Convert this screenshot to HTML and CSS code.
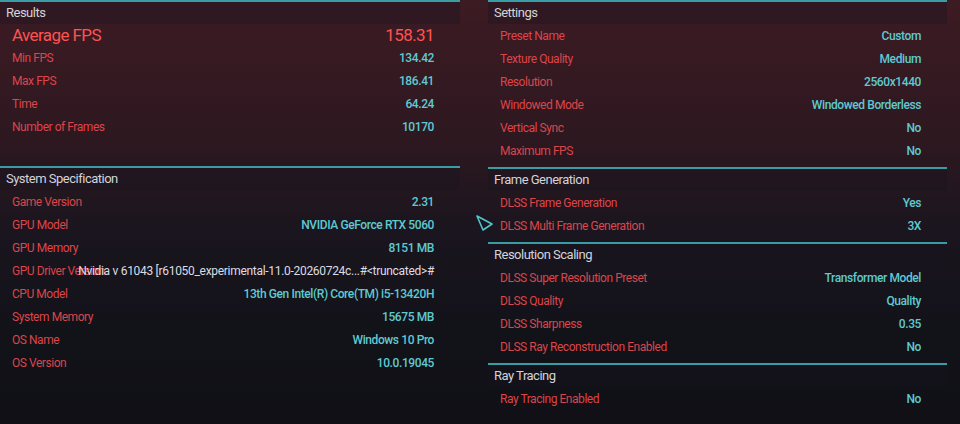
FILE: index.html
```html
<!DOCTYPE html>
<html lang="en">
<head>
    <meta charset="UTF-8">
    <meta name="viewport" content="width=device-width, initial-scale=1.0">
    <title>Benchmark Results</title>
    <link rel="stylesheet" href="styles.css">
</head>
<body>
    <div class="screen">
        <div class="column">
            <section class="panel panel-results">
                <h2 class="panel-title">Results</h2>
                <div class="row row-main"><span class="label">Average FPS</span><span class="value">158.31</span></div>
                <div class="row"><span class="label">Min FPS</span><span class="value">134.42</span></div>
                <div class="row"><span class="label">Max FPS</span><span class="value">186.41</span></div>
                <div class="row"><span class="label">Time</span><span class="value">64.24</span></div>
                <div class="row"><span class="label">Number of Frames</span><span class="value">10170</span></div>
            </section>

            <section class="panel">
                <h2 class="panel-title">System Specification</h2>
                <div class="row"><span class="label">Game Version</span><span class="value">2.31</span></div>
                <div class="row"><span class="label">GPU Model</span><span class="value">NVIDIA GeForce RTX 5060</span></div>
                <div class="row"><span class="label">GPU Memory</span><span class="value">8151 MB</span></div>
                <div class="row"><span class="label">GPU Driver Version</span><span class="value value-raw">Nvidia v 61043 [r61050_experimental-11.0-20260724c...#&lt;truncated&gt;#</span></div>
                <div class="row"><span class="label">CPU Model</span><span class="value">13th Gen Intel(R) Core(TM) i5-13420H</span></div>
                <div class="row"><span class="label">System Memory</span><span class="value">15675 MB</span></div>
                <div class="row"><span class="label">OS Name</span><span class="value">Windows 10 Pro</span></div>
                <div class="row"><span class="label">OS Version</span><span class="value">10.0.19045</span></div>
            </section>
        </div>

        <div class="column column-right">
            <section class="panel">
                <h2 class="panel-title">Settings</h2>
                <div class="row"><span class="label">Preset Name</span><span class="value">Custom</span></div>
                <div class="row"><span class="label">Texture Quality</span><span class="value">Medium</span></div>
                <div class="row"><span class="label">Resolution</span><span class="value">2560x1440</span></div>
                <div class="row"><span class="label">Windowed Mode</span><span class="value">Windowed Borderless</span></div>
                <div class="row"><span class="label">Vertical Sync</span><span class="value">No</span></div>
                <div class="row"><span class="label">Maximum FPS</span><span class="value">No</span></div>
            </section>

            <section class="panel">
                <h2 class="panel-title">Frame Generation</h2>
                <div class="row"><span class="label">DLSS Frame Generation</span><span class="value">Yes</span></div>
                <div class="row"><span class="label">DLSS Multi Frame Generation</span><span class="value">3X</span></div>
            </section>

            <section class="panel">
                <h2 class="panel-title">Resolution Scaling</h2>
                <div class="row"><span class="label">DLSS Super Resolution Preset</span><span class="value">Transformer Model</span></div>
                <div class="row"><span class="label">DLSS Quality</span><span class="value">Quality</span></div>
                <div class="row"><span class="label">DLSS Sharpness</span><span class="value">0.35</span></div>
                <div class="row"><span class="label">DLSS Ray Reconstruction Enabled</span><span class="value">No</span></div>
            </section>

            <section class="panel">
                <h2 class="panel-title">Ray Tracing</h2>
                <div class="row"><span class="label">Ray Tracing Enabled</span><span class="value">No</span></div>
            </section>
        </div>

        <!-- mouse pointer -->
        <svg class="cursor" width="20" height="20" viewBox="0 0 20 20">
            <polygon points="2,2 17,10 8,16" fill="none" stroke="#4fc6cf" stroke-width="1.6" stroke-linejoin="round"/>
        </svg>
    </div>
</body>
</html>
```

FILE: styles.css
```css
/* General Reset */
* {
    margin: 0;
    padding: 0;
    box-sizing: border-box;
}

body {
    width: 960px;
    height: 424px;
    overflow: hidden;
    font-family: Roboto, 'Noto Sans', sans-serif;
    background: linear-gradient(180deg, #3d1b23 0%, #2e1820 32%, #1a151e 55%, #121219 78%, #101016 100%);
}

.screen {
    position: relative;
    display: grid;
    grid-template-columns: 460px 459px;
    column-gap: 28px;
    height: 100%;
}

.column {
    display: flex;
    flex-direction: column;
}

.panel {
    border-top: 2px solid #3a9da5;
    padding-bottom: 5px;
}

.panel-results {
    padding-bottom: 28px;
}

.panel-title {
    height: 22px;
    line-height: 22px;
    padding-left: 6px;
    font-size: 13px;
    font-weight: 400;
    letter-spacing: -0.5px;
    color: #d3d3d8;
    background: rgba(22, 20, 32, 0.35);
}

.row {
    display: grid;
    height: 23px;
    align-items: center;
    padding: 0 26px 0 12px;
    font-size: 12px;
    white-space: nowrap;
}

/* label and value share one cell, so a long value runs over its label */
.row > span {
    grid-area: 1 / 1;
}

.label {
    justify-self: start;
    color: #dc454a;
    letter-spacing: -0.45px;
}

.value {
    justify-self: end;
    color: #5ecad2;
    font-weight: 500;
    letter-spacing: -0.4px;
}

.value-raw {
    color: #dcdde2;
    font-weight: 400;
    letter-spacing: -0.3px;
}

.row-main {
    height: 22px;
    font-size: 17px;
}

.row-main .label,
.row-main .value {
    color: #ff5350;
    font-weight: 400;
    letter-spacing: -0.6px;
}

.cursor {
    position: absolute;
    left: 475px;
    top: 214px;
}
```
